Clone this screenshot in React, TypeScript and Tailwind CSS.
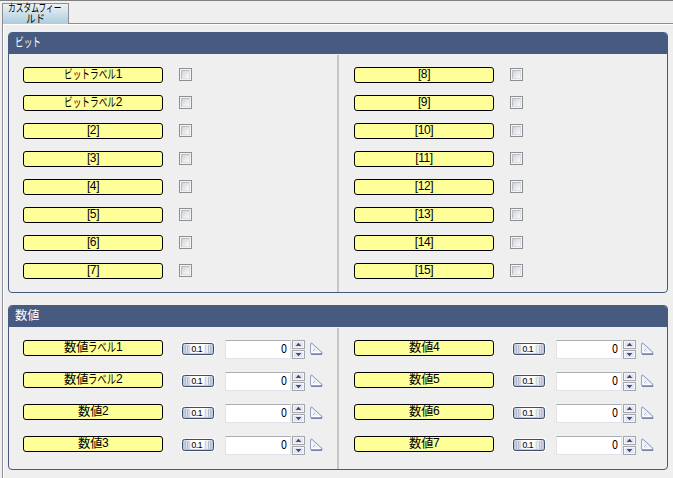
import React from 'react';

// A piece of text condensed horizontally to a fixed advance width.
function Run({ text, width, natural }: { text: string; width: number; natural: number }) {
  return (
    <span className="inline-block whitespace-nowrap" style={{ width }}>
      <span className="inline-block origin-left" style={{ transform: `scaleX(${width / natural})` }}>
        {text}
      </span>
    </span>
  );
}

const kanaWidths: Record<string, number> = { ビットラベル: 52, ラベル: 28, ビット: 26, カスタムフィー: 54, ルド: 19 };

function Condensed({ text, em = 12.5 }: { text: string; em?: number }) {
  const parts = text.match(/数値|[ァ-ー]+|[[\]\d]+/g) ?? [];
  return (
    <span className="flex">
      {parts.map((p, i) => {
        if (p === '数値') return <Run key={i} text={p} width={24.5} natural={em * 2} />;
        if (/\d/.test(p))
          return (
            <span key={i} className="font-['Liberation_Sans',Arial,sans-serif] text-[12px] tracking-[-0.4px]">
              {p}
            </span>
          );
        return <Run key={i} text={p} width={kanaWidths[p] ?? p.length * 9} natural={p.length * em} />;
      })}
    </span>
  );
}

function Label({ text }: { text: string }) {
  return (
    <div className="flex h-4 w-[140px] shrink-0 justify-center rounded-[3px] border border-black bg-[#ffff99] text-[12.5px] leading-[12px]">
      <Condensed text={text} />
    </div>
  );
}

function CheckBox() {
  return (
    <div className="ml-4 h-[13px] w-[13px] border border-[#8e8f8f] bg-[#f4f4f4] p-px">
      <div className="h-[9px] w-[9px] border border-[#b9bdc5] border-r-[#dcdee1] border-b-[#dcdee1] bg-linear-to-br from-[#cfd3d9] to-[#fafafa]" />
    </div>
  );
}

function Dial() {
  return (
    <svg className="ml-[18px] shrink-0" width="34" height="14" viewBox="0 0 34 14">
      <defs>
        <linearGradient id="dial" x1="0" x2="1" y1="0" y2="0">
          <stop offset="0" stopColor="#b4bccf" />
          <stop offset=".15" stopColor="#e3e7f0" />
          <stop offset=".35" stopColor="#fff" />
          <stop offset=".7" stopColor="#fff" />
          <stop offset=".85" stopColor="#e3e7f0" />
          <stop offset="1" stopColor="#b4bccf" />
        </linearGradient>
      </defs>
      <rect x="0" y="0" width="34" height="14" rx="2.5" fill="#fafafa" />
      <rect x="1.5" y="1.5" width="31" height="11" rx="2" fill="url(#dial)" stroke="#3c4d70" />
      <path d="M4.5 3v8M6.5 3v8M27.5 3v8M29.5 3v8" stroke="#b4bacd" />
      <path d="M8 3v8M24.5 3v8" stroke="#d3d7e5" strokeWidth="2" />
      <path d="M3 11.5h28" stroke="#a3adc4" strokeOpacity=".6" />
      <text
        x="10.5"
        y="9.6"
        fontFamily="Liberation Sans, Arial, sans-serif"
        fontSize="8.5"
        textLength="11"
        fill="#111"
        stroke="#111"
        strokeWidth=".15"
      >
        0.1
      </text>
    </svg>
  );
}

function SpinButton({ up }: { up?: boolean }) {
  return (
    <div className="flex h-[9px] w-[13px] items-center justify-center border border-[#a5a5ab] bg-[#e4e6ef]">
      <svg width="11" height="7" viewBox="0 0 11 7">
        <rect x=".5" y=".5" width="10" height="6" fill="none" stroke="#f5f6fa" />
        <path d={up ? 'M2.6 5L5.5 1.8L8.4 5Z' : 'M2.6 2L5.5 5.2L8.4 2Z'} fill="#404d7d" />
      </svg>
    </div>
  );
}

function SetSquare() {
  return (
    <svg className="mt-0.5 ml-[5px]" width="13" height="14" viewBox="0 0 13 14">
      <path d="M.7 1.6Q.9 .5 1.9 1.2L11.9 10.3V12.2H1.5Q.7 12.2 .7 11.3Z" fill="#edf0f8" stroke="#8793b8" />
      <path d="M1.2 12.2H12" stroke="#7284ae" strokeWidth="1.7" />
      <path d="M1.8 3V10.6H9.8" fill="none" stroke="#fff" />
      <path d="M3.4 8.7L5.2 7" stroke="#9ba7c6" />
    </svg>
  );
}

function NumberField() {
  return (
    <>
      <Dial />
      <div className="ml-[10px] flex h-[19px] w-[66px] items-start justify-end rounded-[1px] border border-[#e2e3ea] border-t-[#abadb3] bg-white pr-[3px] text-[12.5px] leading-[14px]">
        <Run text="0" width={6} natural={6.94} />
      </div>
      <div className="ml-px flex flex-col gap-px">
        <SpinButton up />
        <SpinButton />
      </div>
      <SetSquare />
    </>
  );
}

function Panel({ title, left, right }: { title: string; left: React.ReactNode; right: React.ReactNode }) {
  return (
    <section className="w-[660px] overflow-hidden rounded-[4px] border border-[#475b80]">
      <h2 className="h-[21px] bg-[#475b80] pl-[6px] text-[12.5px] leading-[17px] font-normal text-white">
        <Condensed text={title} />
      </h2>
      <div className="flex pt-px">
        <div className="w-[328px] pl-[14px]">{left}</div>
        <div className="w-[2px] bg-[#c6c6c6]" />
        <div className="pl-[15px]">{right}</div>
      </div>
    </section>
  );
}

const bitRows = (labels: string[]) => (
  <div className="flex h-[237px] flex-col gap-3 pt-3">
    {labels.map((l) => (
      <div key={l} className="flex h-4">
        <Label text={l} />
        <div className="pt-px">
          <CheckBox />
        </div>
      </div>
    ))}
  </div>
);

const numberRows = (labels: string[]) => (
  <div className="flex h-[141px] flex-col gap-[13px] pt-3">
    {labels.map((l) => (
      <div key={l} className="flex h-[19px] items-start">
        <Label text={l} />
        <div className="flex items-start [&>svg:first-child]:mt-0.5">
          <NumberField />
        </div>
      </div>
    ))}
  </div>
);

export default function App() {
  return (
    <main
      className="flex h-[478px] w-[673px] flex-col overflow-hidden border-t border-[#808080] bg-[#efefef] pl-0.5 text-black"
      style={{ fontFamily: '"Noto Sans CJK JP", sans-serif' }}
    >
      <div className="flex h-[23px] shrink-0 pt-0.5">
        <div className="flex h-[22px] w-[67px] shrink-0 flex-col items-center border border-b-0 border-[#8c8c98] bg-linear-to-b from-[#edf1f3] to-[#a9cbdc] text-[11px] leading-[11px]">
          <div className="-mt-[2px] mr-px">
            <Condensed text="カスタムフィー" em={11} />
          </div>
          <Condensed text="ルド" em={11} />
        </div>
        <div className="flex-1 border-b border-[#8c8c98]" />
      </div>
      <div className="flex-1 border-l border-[#8c8c98]">
        <div className="flex h-full flex-col gap-3 border-t border-l border-white pt-[7px] pl-1">
          <Panel
            title="ビット"
            left={bitRows(['ビットラベル1', 'ビットラベル2', '[2]', '[3]', '[4]', '[5]', '[6]', '[7]'])}
            right={bitRows(['[8]', '[9]', '[10]', '[11]', '[12]', '[13]', '[14]', '[15]'])}
          />
          <Panel
            title="数値"
            left={numberRows(['数値ラベル1', '数値ラベル2', '数値2', '数値3'])}
            right={numberRows(['数値4', '数値5', '数値6', '数値7'])}
          />
        </div>
      </div>
    </main>
  );
}
